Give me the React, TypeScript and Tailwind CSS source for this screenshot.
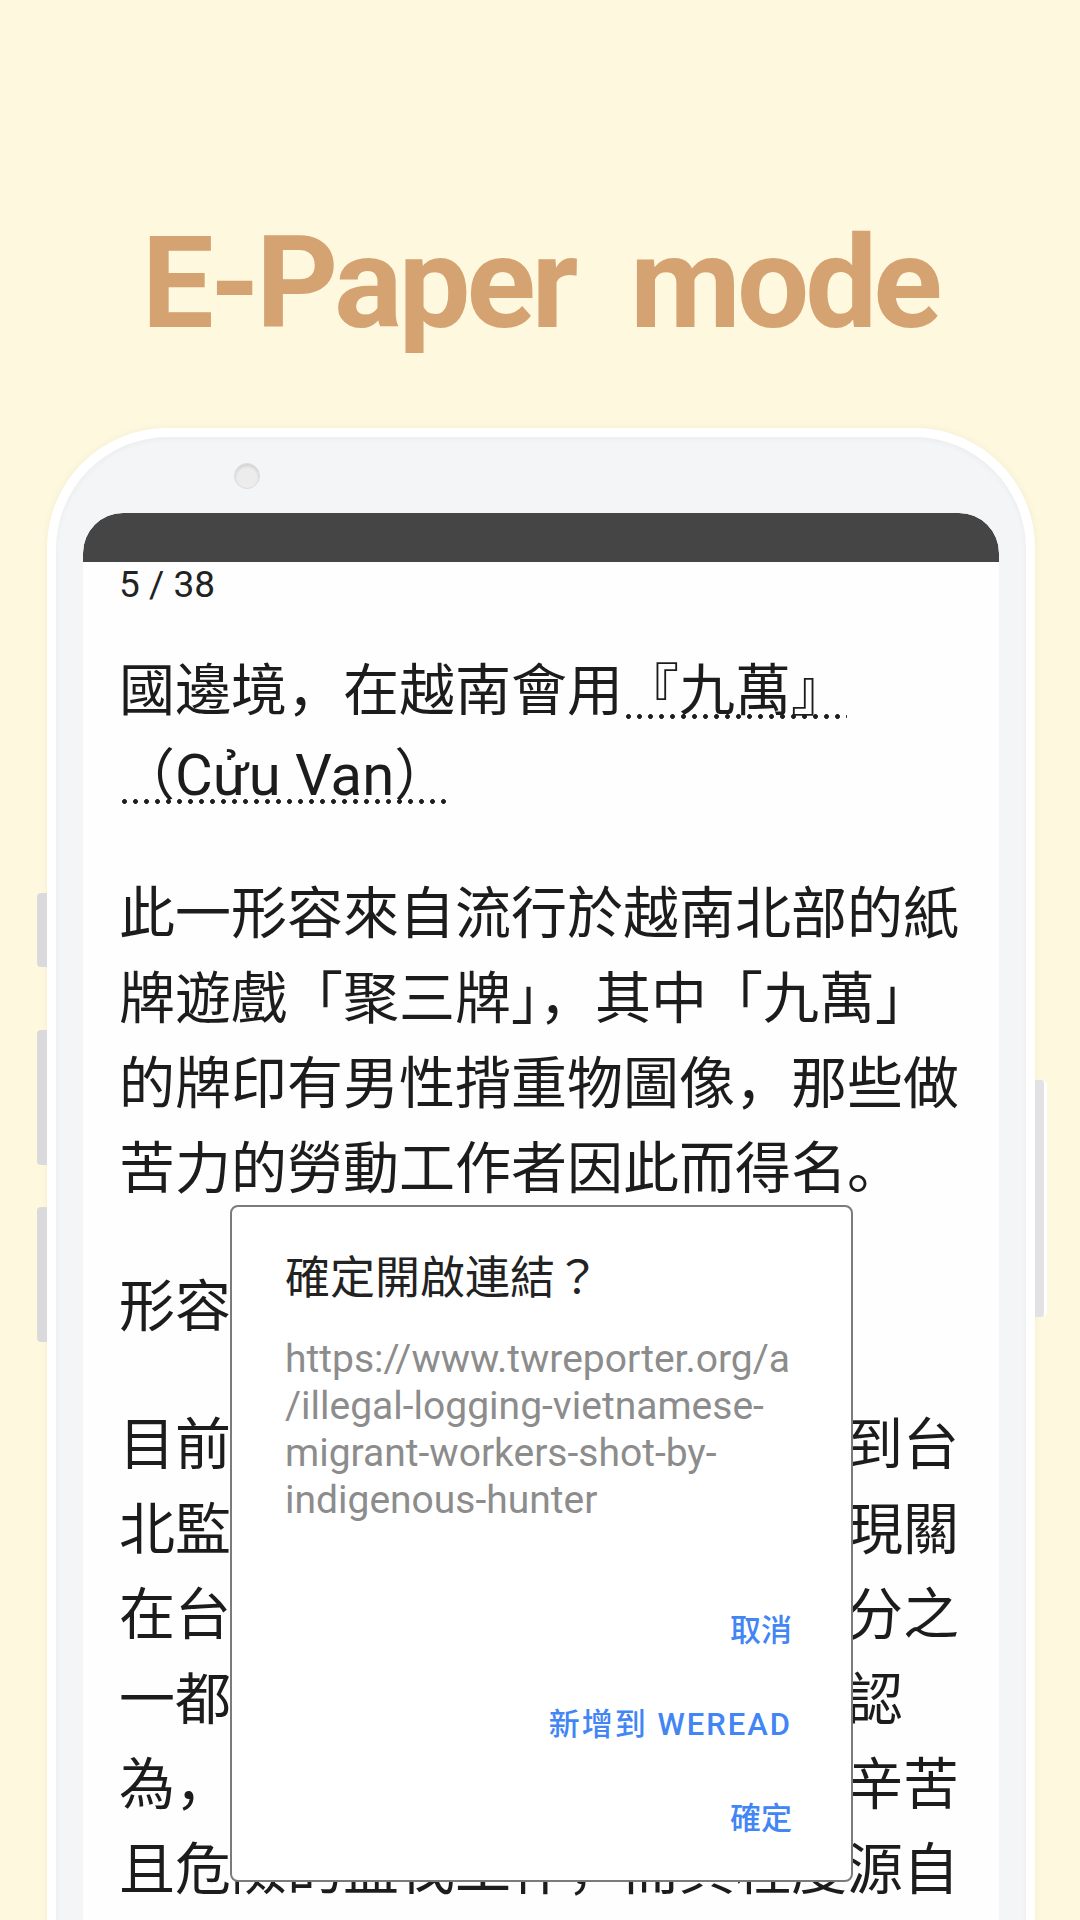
const cjk = "font-['Noto_Sans_CJK_SC',sans-serif]";
const dotted =
  "bg-[radial-gradient(circle,#1e1e1e_2.1px,transparent_2.7px)] bg-[length:11px_7px] bg-repeat-x bg-[position:0_calc(100%_-_6px)]";

const paragraphs: string[][] = [
  [
    "此一形容來自流行於越南北部的紙",
    "牌遊戲「聚三牌」，其中「九萬」",
    "的牌印有男性揹重物圖像，那些做",
    "苦力的勞動工作者因此而得名。",
  ],
  ["形容越南移工的俗稱。"],
  [
    "目前已有數百名越南移工被送到台",
    "北監服刑，這批人之中多數人現關",
    "在台北與宜蘭監獄，其中約三分之",
    "一都是盜伐林木的山老鼠，被認",
    "為，從事的是山林裡最底層、辛苦",
    "且危險的盜伐工作，而其程度源自",
    "越南家鄉的貧窮與債務壓力。",
  ],
];

const urlLines = [
  "https://www.twreporter.org/a",
  "/illegal-logging-vietnamese-",
  "migrant-workers-shot-by-",
  "indigenous-hunter",
];

function LinkDialog() {
  return (
    <div className="absolute left-[147px] top-[692px] h-[677px] w-[623px] rounded-[8px] border-2 border-[#7b7b7b] bg-white pl-[53px] pt-[38px]">
      <p className={`${cjk} text-[45px] leading-[60px] text-[#222]`}>
        確定開啟連結<span className="font-['Noto_Sans_CJK_TC',sans-serif]">？</span>
      </p>
      <div className="mt-[31px] font-['Roboto',sans-serif] text-[39px] leading-[47px] text-[#8c8c8c]">
        {urlLines.map((line) => (
          <div key={line} className="whitespace-nowrap">
            {line}
          </div>
        ))}
      </div>
      <div className="mt-[60px] flex flex-col items-end pr-[59px] font-['Roboto','Noto_Sans_CJK_SC',sans-serif] text-[31px] font-medium text-[#4285f4]">
        <div className="flex h-[94px] items-center">取消</div>
        <div className="flex h-[94px] items-center tracking-[2px]">新增到 WEREAD</div>
        <div className="flex h-[94px] items-center">確定</div>
      </div>
    </div>
  );
}

export default function App() {
  return (
    <div className="h-[1920px] w-[1080px] overflow-hidden bg-[#fef8df]">
      <h1 className="whitespace-pre pt-[219px] text-center font-['Roboto',sans-serif] text-[128px] font-bold leading-[128px] tracking-[-4px] text-[#d5a271]">
        E-Paper  mode
      </h1>

      {/* phone */}
      <div className="relative ml-[47px] mt-[81px] w-[988px] rounded-t-[120px] bg-white px-[9px] pt-[9px] shadow-[0_0_8px_rgba(0,0,0,0.05)]">
        <div className="absolute -left-[10px] top-[465px] h-[74px] w-[10px] rounded-l-[4px] bg-[#dadadc]" />
        <div className="absolute -left-[10px] top-[602px] h-[135px] w-[10px] rounded-l-[4px] bg-[#dadadc]" />
        <div className="absolute -left-[10px] top-[779px] h-[135px] w-[10px] rounded-l-[4px] bg-[#dadadc]" />
        <div className="absolute -right-[12px] top-[652px] h-[237px] w-[12px] rounded-r-[5px] border-r-[3px] border-white bg-[#e2e2e5]" />

        <div className="rounded-t-[112px] bg-[#f4f5f7] px-[27px] pt-[26px] shadow-[inset_0_2px_6px_rgba(0,0,0,0.04)]">
          <div className="ml-[151px] h-[26px] w-[26px] rounded-full border border-[#dcdcdc] bg-[#ececec] shadow-[inset_0_2px_3px_rgba(0,0,0,0.12)]" />

          <div className="relative mt-[24px] h-[1420px] overflow-hidden rounded-t-[40px] bg-[#fefefe]">
            <div className="h-[49px] rounded-t-[40px] bg-[#454545]" />

            <div className="px-[36px] pt-[4px]">
              <p className="font-['Roboto',sans-serif] text-[37px] leading-[37px] text-[#222]">5 / 38</p>

              <div className={`${cjk} mt-[40px] space-y-[53px] text-[56px] leading-[85px] text-[#1c1c1c]`}>
                <div>
                  <div className="whitespace-nowrap">
                    國邊境，在越南會用<span className={dotted}>『九萬』</span>
                  </div>
                  <div className="whitespace-nowrap">
                    <span className={dotted}>
                      （<span className="font-['Roboto',sans-serif] text-[58px] leading-[75px]">Cửu Van</span>）
                    </span>
                  </div>
                </div>

                {paragraphs.map((lines) => (
                  <div key={lines[0]}>
                    {lines.map((line) => (
                      <div key={line} className="whitespace-nowrap">
                        {line}
                      </div>
                    ))}
                  </div>
                ))}
              </div>
            </div>

            <LinkDialog />
          </div>
        </div>
      </div>
    </div>
  );
}
